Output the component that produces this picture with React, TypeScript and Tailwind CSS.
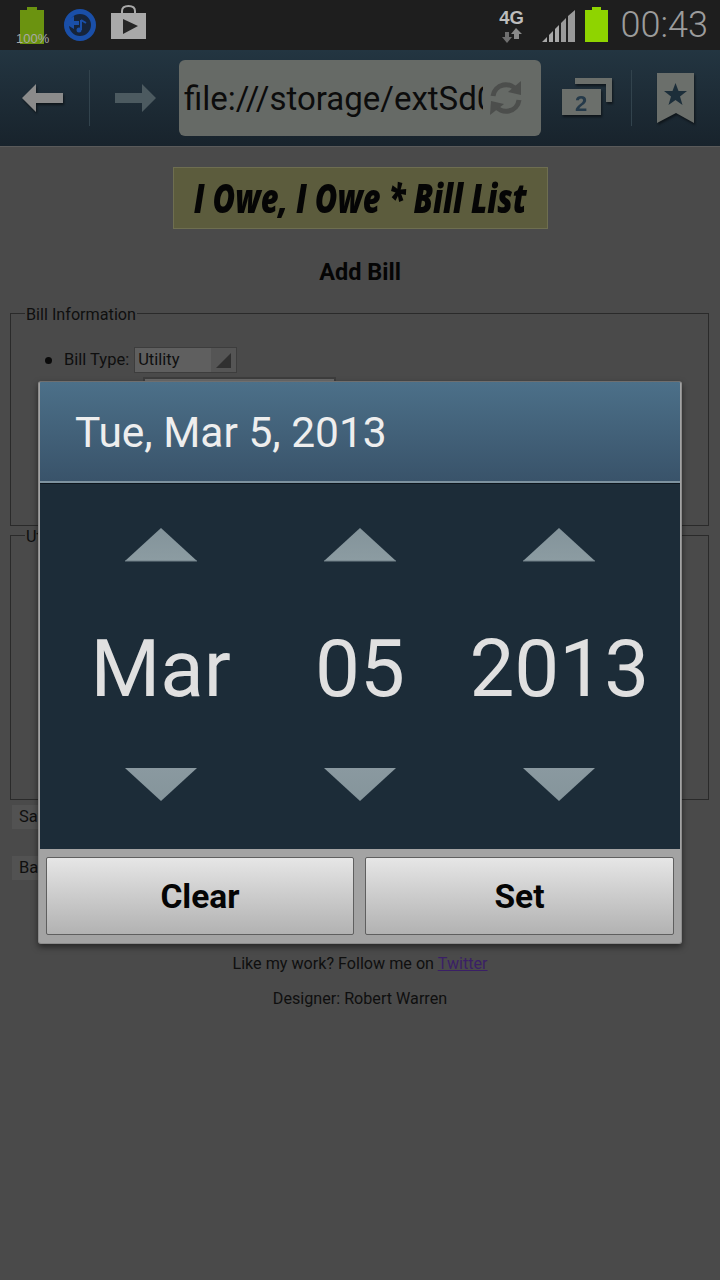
export default function App() {
  const up = (
    <svg width="72" height="34" viewBox="0 0 72 34"><defs><linearGradient id="u" x1="0" y1="0" x2="0" y2="1"><stop offset="0" stopColor="#83939a" /><stop offset="1" stopColor="#8c9ca2" /></linearGradient></defs><path d="M36 0 L72 33 L0 33 Z" fill="url(#u)" /><path d="M0 33 H72" stroke="#6f7f86" strokeWidth="1" /></svg>
  );
  const down = (
    <svg width="72" height="34" viewBox="0 0 72 34"><defs><linearGradient id="d" x1="0" y1="0" x2="0" y2="1"><stop offset="0" stopColor="#8a99a0" /><stop offset="1" stopColor="#85959b" /></linearGradient></defs><path d="M0 1 H72 L36 34 Z" fill="url(#d)" /></svg>
  );
  const cols = ["Mar", "05", "2013"];
  return (
    <div className="relative w-[720px] h-[1280px] overflow-hidden bg-[#4a4a4a] text-[#0f0f0f] font-['Roboto',sans-serif]">
      {/* status bar */}
      <div className="h-[50px] bg-[#1e1e1e] flex items-start relative">
        <div className="relative w-[63px] h-[50px] shrink-0">
          <svg className="absolute left-[20px] top-[7px]" width="24" height="37" viewBox="0 0 24 37"><path d="M7 0 H17 V3 H24 V37 H0 V3 H7 Z" fill="#6b9310" /></svg>
          <span className="absolute left-[16px] top-[31px] text-[13px] leading-[15px] text-[#a8a8a8] font-['Liberation_Sans',sans-serif]">100%</span>
        </div>
        <svg className="mt-[8px] shrink-0" width="34" height="34" viewBox="0 0 34 34">
          <circle cx="17" cy="17" r="13.5" fill="#16243a" stroke="#1a4fa8" strokeWidth="5" />
          <path d="M1 15 L11 8 L11 13 L16 13 L16 17 L11 17 L11 21 Z" fill="#1a4fa8" />
          <path d="M18 12 V22 M18 12 L23 15" stroke="#1a4fa8" strokeWidth="2" fill="none" />
          <circle cx="16" cy="22" r="2.5" fill="#1a4fa8" />
        </svg>
        <svg className="ml-[14px] mt-[5px] shrink-0" width="35" height="35" viewBox="0 0 35 35">
          <path d="M11 9 V6 Q11 1 17.5 1 Q24 1 24 6 V9" fill="none" stroke="#a9a9a9" strokeWidth="2" />
          <path d="M0 8 H35 V34 H0 Z" fill="#a9a9a9" />
          <path d="M12 14 L27 21 L12 29 Z" fill="#262626" />
        </svg>
        <div className="ml-auto flex items-start">
          <div className="w-[40px] flex flex-col items-center pt-[9px]">
            <span className="text-[18.5px] leading-[18px] font-bold text-[#bdbdbd] font-['Liberation_Sans',sans-serif]">4G</span>
            <svg className="mt-[1px]" width="20" height="15" viewBox="0 0 20 15"><path d="M5 15 L0 9 H3 V4 H7 V9 H10 Z" fill="#6f6f6f" /><path d="M14 0 L20 6 H17 V11 H12 V6 H9 Z" fill="#8a8a8a" /></svg>
          </div>
          <svg className="ml-[10px] mt-[10px]" width="34" height="32" viewBox="0 0 34 32">
            <path d="M0 32 L5 27 V32 Z M7 25 L11 21 V32 H7 Z M13 19 L17 15 V32 H13 Z" fill="#a8a8a8" />
            <path d="M19 13 L24 8 V32 H19 Z M26 6 L33 0 V32 H26 Z" fill="#9a9a9a" />
          </svg>
          <svg className="ml-[9px] mt-[7px]" width="23" height="35" viewBox="0 0 23 35"><path d="M7 0 H16 V3 H23 V35 H0 V3 H7 Z" fill="#8fd400" /></svg>
          <span className="ml-[13px] mr-[12px] mt-[4px] text-[36px] leading-[42px] text-[#9c9c9c] font-light">00:43</span>
        </div>
      </div>
      {/* browser toolbar */}
      <div className="h-[96px] bg-gradient-to-b from-[#233541] to-[#18232c] flex items-center">
        <svg className="ml-[22px] shrink-0 drop-shadow-[1px_2px_1px_rgba(0,0,0,0.5)]" width="42" height="28" viewBox="0 0 42 28"><path d="M0 14 L14 0 V9 H41 V19 H14 V28 Z" fill="#8b8b8b" /></svg>
        <div className="ml-[25px] w-px h-[56px] bg-[#32434d] shrink-0" />
        <svg className="ml-[25px] shrink-0" width="42" height="28" viewBox="0 0 42 28"><path d="M41 14 L27 0 V9 H0 V19 H27 V28 Z" fill="#4c5a60" /></svg>
        <div className="ml-[22px] w-[362px] h-[76px] rounded-[6px] bg-[#666a66] flex items-center pl-[5px] shrink-0">
          <div className="w-[299px] pt-[2px] overflow-hidden whitespace-nowrap text-[33px] leading-[40px] text-[#0c0c0c]">file:///storage/extSd0</div>
          <svg className="ml-[5px]" width="36" height="36" viewBox="0 0 36 36" fill="none">
            <path d="M5 16 A13 13 0 0 1 29 11" stroke="#4c4e4c" strokeWidth="5" />
            <path d="M33 1 L33 15 L20 12 Z" fill="#4c4e4c" />
            <path d="M31 20 A13 13 0 0 1 7 25" stroke="#4c4e4c" strokeWidth="5" />
            <path d="M2 35 L3 21 L16 24 Z" fill="#4c4e4c" />
          </svg>
        </div>
        <div className="relative ml-[21px] w-[50px] h-[40px] shrink-0 drop-shadow-[1px_2px_1px_rgba(0,0,0,0.5)]">
          <svg className="absolute left-0 top-0" width="50" height="40" viewBox="0 0 50 40"><path d="M13 0 H50 V24 H44 V6 H13 Z" fill="#6b6f6b" /><path d="M0 11 H39 V37 H0 Z" fill="#6b6f6b" /></svg>
          <span className="absolute left-[13px] top-[13px] text-[22px] leading-[26px] font-bold text-[#253a4a] font-['Liberation_Sans',sans-serif]">2</span>
        </div>
        <div className="ml-[19px] w-px h-[56px] bg-[#32434d] shrink-0" />
        <svg className="ml-[25px] shrink-0 drop-shadow-[1px_2px_1px_rgba(0,0,0,0.5)]" width="38" height="50" viewBox="0 0 38 50"><path d="M0 0 H37 V50 L19 40 L0 50 Z" fill="#6b6f6b" /><path d="M18.5 10 L21.5 18 L30 18 L23 23.5 L25.5 32 L18.5 27 L11.5 32 L14 23.5 L7 18 L15.5 18 Z" fill="#1c2e3a" /></svg>
      </div>
      {/* dimmed page */}
      <div className="h-[1134px] border-t border-[#5a5a5a] px-[10px]">
        <div className="mx-auto mt-[20px] w-[375px] h-[62px] border border-[#6e6e50] bg-[#5c5c3d] flex items-center justify-center overflow-hidden">
          <span className="shrink-0 text-[40px] leading-[44px] font-extrabold italic text-[#050505] font-['Open_Sans',sans-serif] whitespace-nowrap scale-x-[0.77]">I Owe, I Owe * Bill List</span>
        </div>
        <h2 className="mt-[28px] text-center text-[23.5px] leading-[30px] font-bold text-[#050505]">Add Bill</h2>
        <fieldset className="mt-[16px] h-[223px] w-[699px] border border-[#2a2a2a] pl-[14px]">
          <legend className="pt-[4px] text-[16.2px] leading-[16px] px-px">Bill Information</legend>
          <div className="mt-[24px] ml-[21px] flex items-center h-[26px] text-[16.5px]">
            <span className="w-[7px] h-[7px] rounded-full bg-[#0a0a0a] mr-[12px] -ml-[1px]" />
            <span>Bill Type:</span>
            <div className="ml-[5px] w-[103px] h-[26px] border border-[#3d3d3d] bg-[#5f5f5f] flex items-center">
              <span className="flex-1 pl-[3px]">Utility</span>
              <div className="w-[25px] h-[24px] bg-[#555555] flex items-center justify-center">
                <svg width="15" height="15" viewBox="0 0 15 15"><path d="M15 0 V15 H0 Z" fill="#303030" /></svg>
              </div>
            </div>
          </div>
          <div className="mt-[4px] ml-[118px] w-[193px] h-[30px] border-2 border-[#3d3d3d] bg-[#6a6a6a]" />
        </fieldset>
        <fieldset className="-mt-px h-[275px] w-[699px] border border-[#2a2a2a] pl-[14px]">
          <legend className="pt-[4px] text-[16.2px] leading-[16px] px-px">Utility</legend>
        </fieldset>
        <div className="ml-[2px] mt-[5px] w-[120px] h-[24px] bg-[#525252] pl-[7px] text-[16.5px] leading-[24px]">Save</div>
        <div className="ml-[2px] mt-[27px] w-[120px] h-[24px] bg-[#525252] pl-[7px] text-[16.5px] leading-[24px]">Back</div>
        <p className="mt-[74px] text-center text-[16.15px] leading-[20px]">Like my work? Follow me on <span className="underline text-[#3a1f66]">Twitter</span></p>
        <p className="mt-[15px] text-center text-[16.15px] leading-[20px]">Designer: Robert Warren</p>
      </div>
      {/* date picker dialog */}
      <div className="absolute left-[38px] top-[381px] w-[644px] h-[563px] rounded-[3px] bg-[#a3a3a3] border border-[#8c8c8c] border-t-[#6f6f6f] shadow-[0_3px_6px_rgba(0,0,0,0.5)] flex flex-col overflow-hidden">
        <div className="h-[99px] shrink-0 bg-gradient-to-b from-[#4c7089] to-[#39536a] flex items-center pl-[35px] pt-[3px] text-[42.5px] leading-[48px] text-[#eeeeee] mx-px">Tue, Mar 5, 2013</div>
        <div className="h-[2px] shrink-0 bg-[#7d929f] mx-px" />
        <div className="h-[1px] shrink-0 bg-[#0d161d] mx-px" />
        <div className="h-[365px] shrink-0 bg-[#1c2c38] mx-px grid grid-cols-3 px-[21px]">
          {cols.map((c) => (
            <div key={c} className="flex flex-col items-center">
              <div className="mt-[44px] h-[34px]">{up}</div>
              <div className="mt-[64px] h-[86px] flex items-center justify-center text-[80px] leading-[86px] font-normal text-[#e0e0e0]">{c}</div>
              <div className="mt-[55px] h-[34px]">{down}</div>
            </div>
          ))}
        </div>
        <div className="flex-1 flex gap-[11px] px-[7px] pt-[8px]">
          <button className="w-[308px] h-[78px] rounded-[2px] border border-[#5f5f5f] bg-gradient-to-b from-[#e6e6e6] to-[#b2b2b2] pt-[3px] text-[33.5px] font-bold text-[#050505]">Clear</button>
          <button className="w-[309px] h-[78px] rounded-[2px] border border-[#5f5f5f] bg-gradient-to-b from-[#e6e6e6] to-[#b2b2b2] pt-[3px] text-[33.5px] font-bold text-[#050505]">Set</button>
        </div>
      </div>
    </div>
  );
}
